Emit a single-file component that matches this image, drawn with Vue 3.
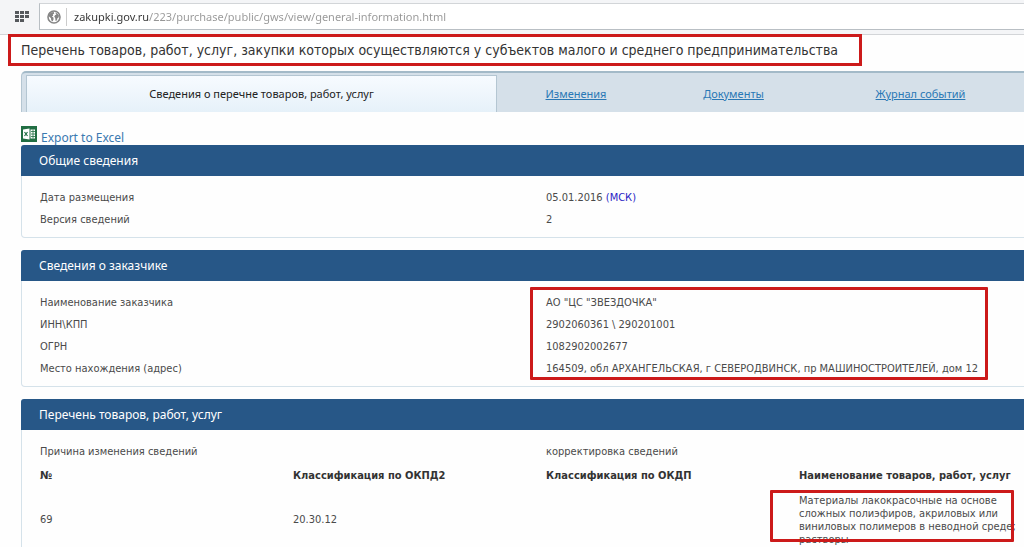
<script setup>
import { ref } from 'vue'

const address = ref('zakupki.gov.ru/223/purchase/public/gws/view/general-information.html')
const customer = [
  ['Наименование заказчика', 'АО "ЦС "ЗВЕЗДОЧКА"'],
  ['ИНН\\КПП', '2902060361 \\ 290201001'],
  ['ОГРН', '1082902002677'],
  ['Место нахождения (адрес)', '164509, обл АРХАНГЕЛЬСКАЯ, г СЕВЕРОДВИНСК, пр МАШИНОСТРОИТЕЛЕЙ, дом 12'],
]
const links = ['Изменения', 'Документы', 'Журнал событий']
</script>

<template>
  <div class="page">
    <header class="browser">
      <button class="apps" type="button" aria-label="Экспресс-панель">
        <svg width="14" height="11" viewBox="0 0 14 11" fill="#55595d">
          <path d="M0 0h4v3H0zM5 0h4v3H5zM10 0h4v3h-4zM0 4h4v3H0zM5 4h4v3H5zM10 4h4v3h-4zM0 8h4v3H0zM5 8h4v3H5z" />
        </svg>
      </button>
      <div class="address">
        <svg width="14" height="14" viewBox="0 0 14 14">
          <circle cx="7" cy="7" r="6" fill="#fff" stroke="#858585" stroke-width="1.6" />
          <path d="M2 4.5 4 2.4 6.8 2l.4 1.6-1.4 1 .4 1.2-1.4.8 1.6 1 .2 1.6-1 2.4-1.4-1.4-.2-2L2 6.500zM8.200 2.600l2.200.8L12 5.600l-.4 2-1.2.6-.4 2-1.400.8-.4-3L7.200 6.400l1-1.400 1.200-.2z" fill="#858585" />
        </svg>
        <input v-model="address" type="text" aria-label="Адрес страницы" spellcheck="false" />
      </div>
    </header>

    <main>
      <h1>Перечень товаров, работ, услуг, закупки которых осуществляются у субъектов малого и среднего предпринимательства</h1>

      <nav>
        <a class="active" href="#" aria-current="page">Сведения о перечне товаров, работ, услуг</a>
        <a v-for="link in links" :key="link" href="#">{{ link }}</a>
      </nav>

      <a class="export" href="#">
        <svg width="16" height="16" viewBox="0 0 16 16">
          <path fill="#216e43" d="M0 0h16v16H0z" />
          <path fill="#fff" d="M2 3.500 8.500 2.500v11L2 12.500zM9.500 3.500H14v9H9.500z" />
          <path d="m3.500 6 3 4M6.500 6l-3 4" stroke="#216e43" stroke-width="1.200" />
          <path d="M10 5.500h4M10 8h4M10 10.500h4M12 3.500v9" stroke="#216e43" stroke-width=".8" />
        </svg>
        <span>Export to Excel</span>
      </a>

      <section>
        <h2>Общие сведения</h2>
        <dl>
          <dt>Дата размещения</dt>
          <dd>05.01.2016 <span class="zone">(МСК)</span></dd>
          <dt>Версия сведений</dt>
          <dd>2</dd>
        </dl>
      </section>

      <section>
        <h2>Сведения о заказчике</h2>
        <dl>
          <template v-for="[name, value] in customer" :key="name">
            <dt>{{ name }}</dt>
            <dd>{{ value }}</dd>
          </template>
          <div class="mark mark-customer"></div>
        </dl>
      </section>

      <section>
        <h2>Перечень товаров, работ, услуг</h2>
        <dl class="reason">
          <dt>Причина изменения сведений</dt>
          <dd>корректировка сведений</dd>
        </dl>
        <table>
          <thead>
            <tr>
              <th>№</th>
              <th>Классификация по ОКПД2</th>
              <th>Классификация по ОКДП</th>
              <th>Наименование товаров, работ, услуг</th>
            </tr>
          </thead>
          <tbody>
            <tr>
              <td>69</td>
              <td>20.30.12</td>
              <td></td>
              <td class="goods">
                Материалы лакокрасочные на основе<br />сложных полиэфиров, акриловых или<br />виниловых полимеров в неводной среде;<br />растворы
                <div class="mark mark-goods"></div>
              </td>
            </tr>
          </tbody>
        </table>
      </section>
    </main>
  </div>
</template>

<style>
body {
  margin: 0;
  background: #fefefe;
}
</style>

<style scoped>
* {
  box-sizing: border-box;
}
.page {
  height: 100vh;
  overflow: hidden;
  color: #4a4a4a;
  font: 11px/22px "DejaVu Sans Condensed", "Noto Sans", sans-serif;
}
.browser {
  display: flex;
  gap: 10px;
  height: 35px;
  padding: 3px 0 4px 14px;
  background: #f4f5f7;
  border-bottom: 1px solid #d3d5d8;
}
.apps {
  display: flex;
  align-items: center;
  justify-content: center;
  width: 15px;
  padding: 0;
  border: 0;
  background: none;
}
.apps svg {
  flex: none;
}
.address {
  display: flex;
  flex: 1;
  align-items: center;
  gap: 5px;
  padding-left: 7px;
  background: #fff;
  border: 1px solid #b9bfc4;
  border-top-color: #d2d5d8;
  border-right: 0;
}
.address svg {
  flex: none;
}
input {
  flex: 1;
  height: 18px;
  padding: 0 0 0 7px;
  border: 0;
  border-left: 1px solid #ccc;
  outline: 0;
  color: transparent;
  background: linear-gradient(90deg, #333 82px, #969696 82px);
  -webkit-background-clip: text;
  background-clip: text;
  font: 11px/18px "Noto Sans", sans-serif;
}
main {
  margin-right: -47px;
  padding-left: 21px;
}
h1 {
  width: fit-content;
  margin: -1px 0 5px -13px;
  padding: 0 21px 0 10px;
  border: 3px solid #cc1a1a;
  color: #333;
  background: #fff;
  font-size: 14px;
  font-weight: 400;
  line-height: 26px;
  white-space: nowrap;
}
nav {
  display: grid;
  grid-template-columns: 471fr 158fr 157fr 217fr 42fr;
  height: 41px;
  padding: 2px 0 0 4px;
  border-top: 2px solid #a3bac8;
  border-left: 1px solid #b4c6d2;
  border-top-left-radius: 5px;
  background: #d5e0e9;
  font-family: "Noto Sans", sans-serif;
}
nav a {
  display: flex;
  align-items: center;
  justify-content: center;
  color: #2a78b5;
  font-size: 11px;
  white-space: nowrap;
}
nav a.active {
  border: 1px solid #b4c6d2;
  border-bottom: 0;
  color: #222;
  background: linear-gradient(#f7fbff, #e6f1f9);
  text-decoration: none;
}
.export {
  display: flex;
  gap: 4px;
  width: fit-content;
  height: 19px;
  margin-top: 14px;
  color: #3a79b0;
  font: 12px/23px "Noto Sans", sans-serif;
  text-decoration: none;
}
section {
  margin-bottom: 12px;
  border: 1px solid #d5e2ea;
  border-top: 0;
  border-radius: 4px;
}
h2 {
  margin: 0 0 0 -1px;
  padding-left: 18px;
  border-radius: 3px 3px 0 0;
  color: #fff;
  background: #275787;
  font: 12px/31px "Noto Sans", sans-serif;
}
dl {
  position: relative;
  display: grid;
  grid-template-columns: 1fr 1fr;
  margin: 0;
  padding: 11px 18px 6px;
}
.reason {
  padding-bottom: 0;
}
dd {
  margin: 0;
}
.zone {
  color: #2a1fc5;
}
table {
  width: 100%;
  padding: 0 18px;
  border-spacing: 0;
  table-layout: fixed;
}
th,
td {
  padding: 0;
  text-align: left;
  white-space: nowrap;
}
th {
  height: 26px;
  color: #333;
}
.goods {
  position: relative;
  padding: 5px 0;
  line-height: 13px;
}
.mark {
  position: absolute;
  border: 3px solid #cc1a1a;
  border-radius: 1px;
}
.mark-customer {
  top: 6px;
  bottom: 6px;
  left: calc(50% - 16px);
  width: 458px;
}
.mark-goods {
  top: 1px;
  left: -29px;
  width: 244px;
  height: 52px;
}
</style>
